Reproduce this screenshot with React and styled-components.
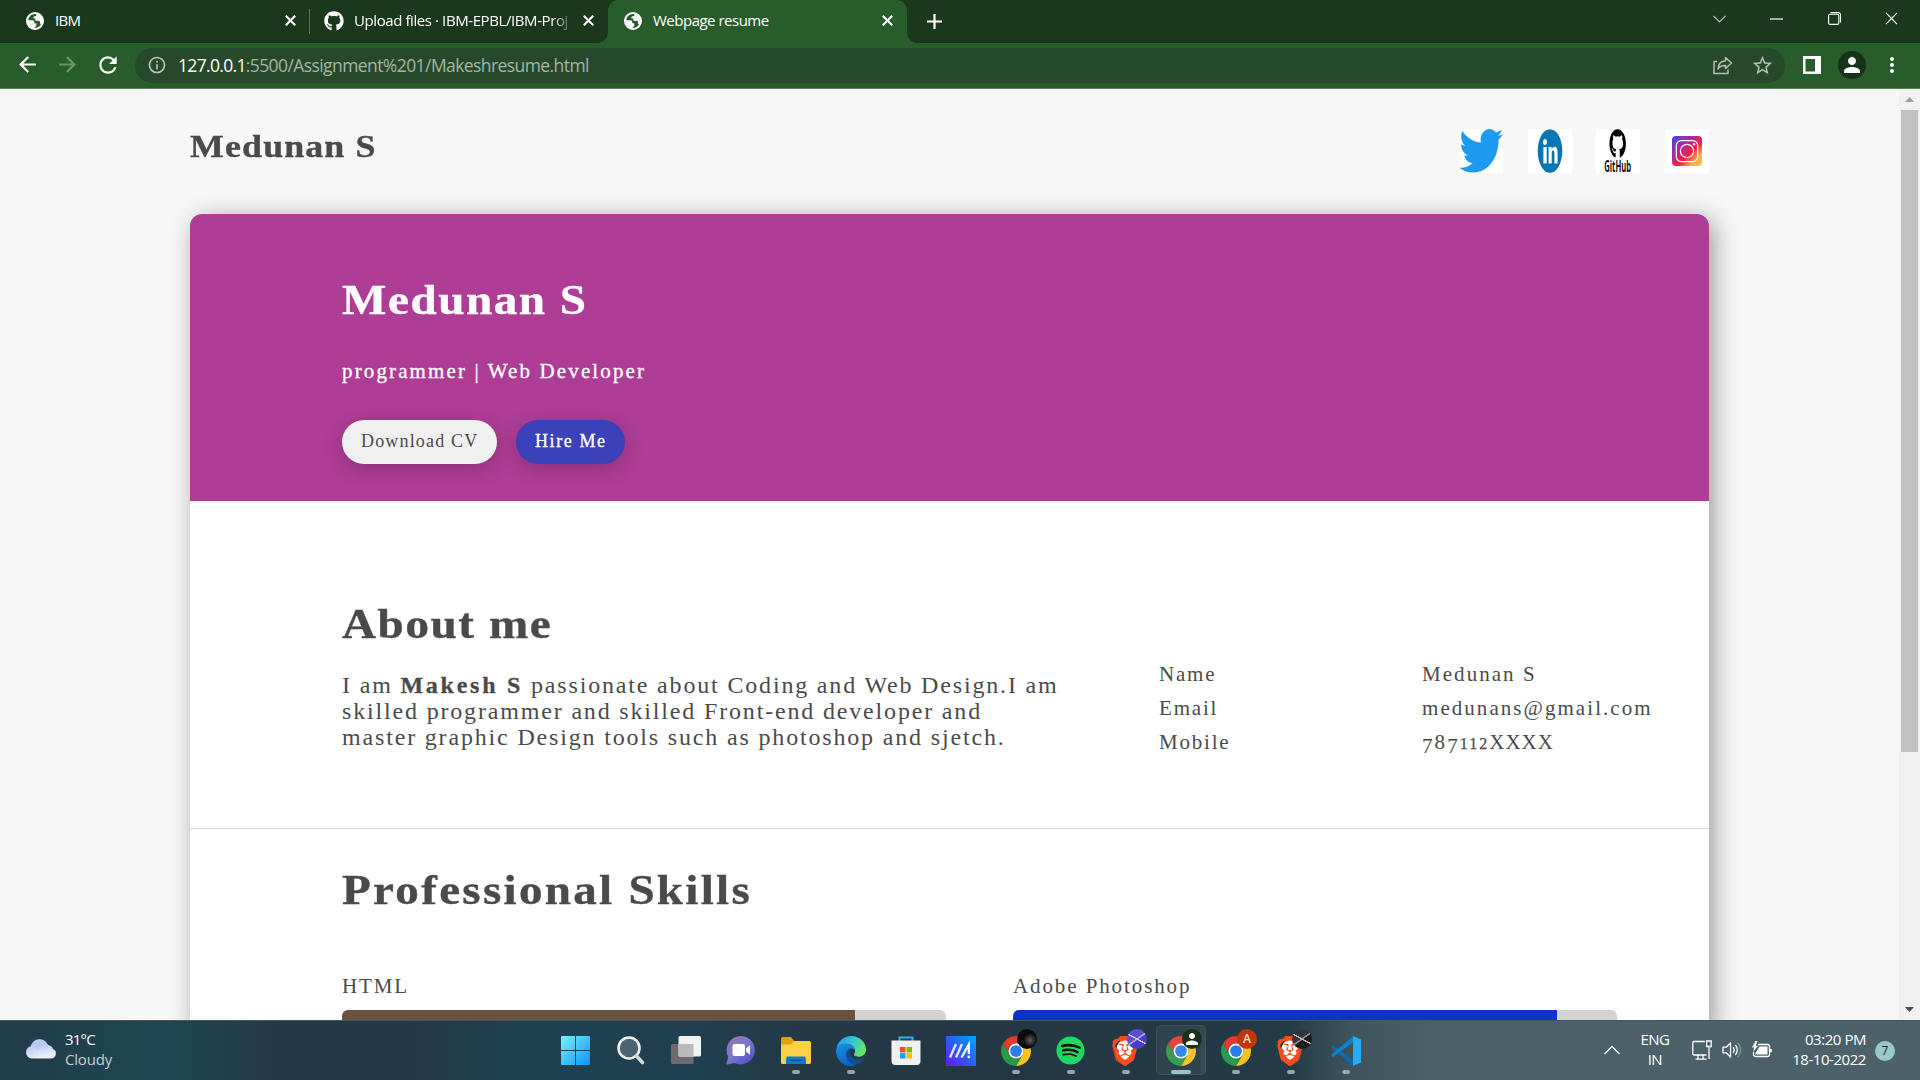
import React from "react";
import styled, { createGlobalStyle, css } from "styled-components";
import { MdArrowBack, MdArrowForward, MdRefresh, MdInfoOutline, MdStarBorder, MdMoreVert, MdPerson } from "react-icons/md";
import { FaGithub, FaSpotify } from "react-icons/fa";
import { SiBrave } from "react-icons/si";

const serif = `"Liberation Serif", Georgia, serif`;
const sans = `"Open Sans", "Segoe UI", sans-serif`;
const ink = "#4a4a4a";

const GlobalStyle = createGlobalStyle`
  *, *::before, *::after { box-sizing: border-box; }
  body { margin: 0; background: #f7f7f7; overflow: hidden; }
  svg { display: block; flex: none; overflow: visible; }
`;

const Screen = styled.div`
  width: 1920px;
  height: 1080px;
  display: flex;
  flex-direction: column;
  overflow: hidden;
  font-family: ${sans};
`;

/* ---------- browser chrome ---------- */

const TabStrip = styled.div`
  height: 43px;
  display: flex;
  background: #1a381b;
  color: #fff;
`;

const Tab = styled.div`
  position: relative;
  width: ${(p) => p.$width}px;
  display: flex;
  align-items: center;
  padding: 0 14px 2px ${(p) => p.$lead}px;
  font-size: 15px;
  letter-spacing: ${(p) => p.$track}px;
  ${(p) => p.$divider && css`
    &::after {
      content: "";
      position: absolute;
      right: 0;
      top: 9px;
      width: 1px;
      height: 25px;
      background: #5c755d;
    }
  `}
  ${(p) => p.$active && css`
    background: #285d2b;
    border-radius: 10px 10px 0 0;
    &::before, &::after {
      content: "";
      position: absolute;
      bottom: 0;
      width: 10px;
      height: 10px;
    }
    &::before {
      left: -10px;
      background: radial-gradient(circle at 0 0, transparent 9.5px, #285d2b 10px);
    }
    &::after {
      right: -10px;
      background: radial-gradient(circle at 100% 0, transparent 9.5px, #285d2b 10px);
    }
  `}
`;

const TabTitle = styled.span`
  flex: 1;
  margin: 0 ${(p) => (p.$fade ? 8 : 7)}px 2px ${(p) => p.$gap || 11}px;
  line-height: 22px;
  white-space: nowrap;
  ${(p) => p.$fade && css`
    -webkit-mask-image: linear-gradient(90deg, #000 calc(100% - 24px), transparent);
    mask-image: linear-gradient(90deg, #000 calc(100% - 24px), transparent);
  `}
`;

const NewTab = styled.div`
  display: flex;
  align-items: center;
  padding: 0 0 1px 20px;
`;

const WindowButtons = styled.div`
  margin-left: auto;
  display: flex;
  align-items: center;
  padding-bottom: 6px;
`;

const WindowButton = styled.div`
  width: 57.3px;
  display: flex;
  justify-content: center;
`;

const Toolbar = styled.div`
  height: 46px;
  display: flex;
  align-items: center;
  background: #285d2b;
  border-bottom: 1px solid #55805a;
  color: #fff;
  padding: 0 12px 1px 15px;
`;

const NavButtons = styled.div`
  flex: none;
  display: flex;
  gap: 15px;
  width: 120px;
  color: #fff;
`;

const Omnibox = styled.div`
  flex: none;
  width: 1650px;
  height: 35px;
  border-radius: 18px;
  background: #26492a;
  display: flex;
  align-items: center;
  padding: 0 11px 0 12px;
  color: #b9c3ba;
`;

const Address = styled.span`
  flex: 1;
  margin-left: 11px;
  font-size: 17.5px;
  line-height: 24px;
  letter-spacing: -0.58px;
  color: #a3b5a5;
  b {
    font-weight: 400;
    color: #fff;
    letter-spacing: -0.68px;
  }
`;

const OmniboxActions = styled.div`
  display: flex;
  align-items: center;
  gap: 18px;
  color: #b4beb5;
`;

const ToolbarActions = styled.div`
  flex: none;
  display: flex;
  align-items: center;
  padding-left: 18px;
  gap: 17px;
`;

const MenuDots = styled.div`
  margin-left: -3px;
`;

const Avatar = styled.div`
  width: 28px;
  height: 28px;
  border-radius: 50%;
  background: #17331a;
  display: flex;
  align-items: center;
  justify-content: center;
`;

/* ---------- page ---------- */

const Viewport = styled.div`
  height: 931px;
  display: flex;
  overflow: hidden;
  background: #f7f7f7;
`;

const Document = styled.main`
  width: 1899px;
  height: 931px;
  overflow: hidden;
  display: flex;
  flex-direction: column;
  align-items: center;
  font-family: ${serif};
  color: ${ink};
`;

const Masthead = styled.header`
  width: 1519px;
  height: 125px;
  flex: none;
  display: flex;
  justify-content: space-between;
  padding-top: 40px;
`;

const wide = css`
  transform: scaleX(1.12);
  transform-origin: left;
  -webkit-text-stroke: 0.4px currentColor;
`;

const Brand = styled.h2`
  margin: 0;
  font-size: 32px;
  line-height: 34px;
  letter-spacing: 1.03px;
  ${wide}
`;

const Social = styled.nav`
  display: flex;
  gap: 24.7px;
`;

const SocialTile = styled.div`
  width: 44px;
  height: 44px;
  background: #fff;
`;

const Card = styled.div`
  width: 1519px;
  flex: none;
  background: #fff;
  border-radius: 12px 12px 0 0;
  box-shadow: 5px 5px 25px rgba(0, 0, 0, 0.38);
`;

const Hero = styled.section`
  height: 287px;
  padding: 62px 152px 0;
  border-radius: 12px 12px 0 0;
  background: #ae3d95;
  color: #fff;
`;

const Heading = styled.h1`
  display: table;
  margin: 0;
  font-size: 42px;
  line-height: 48px;
  letter-spacing: ${(p) => p.$track}px;
  white-space: nowrap;
  ${wide}
`;

const Role = styled.p`
  margin: 35px 0 37px;
  font-size: 21px;
  line-height: 24px;
  letter-spacing: 2.13px;
  -webkit-text-stroke: 0.3px #fff;
`;

const ButtonRow = styled.div`
  display: flex;
  gap: 19px;
`;

const PillButton = styled.button`
  width: ${(p) => p.$width}px;
  height: 44px;
  border: 0;
  border-radius: 22px;
  padding: 0 0 2px 19px;
  text-align: left;
  white-space: nowrap;
  font-family: ${serif};
  font-size: 18px;
  letter-spacing: ${(p) => p.$track}px;
  background: ${(p) => (p.$primary ? "#3b41b8" : "#f0f0f0")};
  color: ${(p) => (p.$primary ? "#fff" : ink)};
  ${(p) => p.$primary && css`-webkit-text-stroke: 0.3px #fff;`}
  box-shadow: 0 5px 20px rgba(0, 0, 0, 0.2);
`;

const About = styled.section`
  height: 328px;
  display: flex;
  padding: 99px 0 0 152px;
  border-bottom: 1px solid #d8d8d8;
`;

const AboutText = styled.div`
  width: 817px;
`;

const Bio = styled.p`
  margin: 24px 0 0;
  font-size: 24px;
  line-height: 26px;
  letter-spacing: 1.83px;
  white-space: nowrap;
  b {
    letter-spacing: 2.75px;
    -webkit-text-stroke: 0.3px currentColor;
  }
`;

const Details = styled.dl`
  margin: 57px 0 0;
  display: grid;
  grid-template-columns: 263px auto;
  grid-auto-rows: 34px;
  font-size: 21px;
  line-height: 34px;
  letter-spacing: 2.05px;
  dt, dd { margin: 0; white-space: nowrap; }
  dt { letter-spacing: 1.8px; }
`;

const LowDigit = styled.span`
  vertical-align: -4px;
  line-height: 0;
`;

const SmallDigits = styled.span`
  font-size: 16px;
  line-height: 0;
  -webkit-text-stroke: 0.25px currentColor;
`;

const Tight = styled.span`
  letter-spacing: 1px;
`;

const Skills = styled.section`
  padding: 37px 92px 0 152px;
`;

const SkillGrid = styled.div`
  margin-top: 60px;
  display: grid;
  grid-template-columns: 604px 604px;
  column-gap: 67px;
`;

const SkillName = styled.div`
  font-size: 21px;
  line-height: 24px;
  letter-spacing: 1.9px;
`;

const SkillTrack = styled.div`
  margin-top: 12px;
  height: 20px;
  border-radius: 6px;
  background: #d3d3d3;
  overflow: hidden;
`;

const SkillFill = styled.div`
  width: ${(p) => p.$level}%;
  height: 100%;
  background: ${(p) => p.$color};
`;

const Scrollbar = styled.div`
  width: 21px;
  height: 931px;
  background: #f1f1f1;
  display: flex;
  flex-direction: column;
  align-items: center;
`;

const ScrollArrow = styled.div`
  height: 21px;
  display: flex;
  align-items: center;
  ${(p) => p.$end && css`margin-top: auto;`}
`;

const ScrollThumb = styled.div`
  width: 17px;
  height: 642px;
  background: #c1c1c1;
`;

/* ---------- taskbar ---------- */

const Taskbar = styled.footer`
  height: 60px;
  display: grid;
  grid-template-columns: 548px 825px 1fr;
  border-top: 1px solid #45565d;
  color: #fff;
  font-size: 15px;
  line-height: 20px;
  background: linear-gradient(90deg, #213c4a 0, #1e4652 160px, #243848 280px, #243848 400px, #1f4150 520px,
    #203f4f 700px, #243845 820px, #243744 1000px, #243a47 1290px, #3d545d 1350px, #4a6068 1430px, #4b626a 100%);
`;

const Weather = styled.div`
  display: flex;
  align-items: center;
  gap: 9px;
  padding: 0 0 4px 25px;
`;

const Stack = styled.div`
  display: flex;
  flex-direction: column;
  align-items: ${(p) => p.$align || "flex-start"};
  letter-spacing: ${(p) => p.$track || 0}px;
  white-space: nowrap;
`;

const Muted = styled.span`
  color: #c3cdd1;
  letter-spacing: -0.2px;
`;

const Apps = styled.div`
  display: flex;
`;

const AppSlot = styled.div`
  position: relative;
  width: 55px;
  height: 59px;
  display: flex;
  justify-content: center;
  padding-top: 15px;
  ${(p) => p.$running && css`
    &::after {
      content: "";
      position: absolute;
      left: ${(p.$active ? 18 : 23.5)}px;
      top: 49px;
      width: ${p.$active ? 20 : 8}px;
      height: 4px;
      border-radius: 2px;
      background: ${p.$active ? "#98c5cb" : "#9aa5aa"};
    }
  `}
  ${(p) => p.$active && css`
    &::before {
      content: "";
      position: absolute;
      left: 3px;
      top: 4px;
      width: 50px;
      height: 50px;
      border-radius: 5px;
      background: rgba(255, 255, 255, 0.06);
      border: 1px solid rgba(255, 255, 255, 0.07);
      box-shadow: inset -6px 0 0 -1px rgba(255, 255, 255, 0.03);
    }
  `}
`;

const ProfileBadge = styled.div`
  position: absolute;
  left: 29px;
  top: 8px;
  width: 20px;
  height: 20px;
  border-radius: 50%;
  display: flex;
  align-items: center;
  justify-content: center;
  font-size: 12px;
  font-weight: 600;
  color: #f6d5ca;
  background: ${(p) => p.$fill};
`;

const BraveMark = styled.div`
  width: 30px;
  height: 30px;
  margin-left: -2px;
  background: radial-gradient(ellipse 9px 11px at 50% 48%, #fff 92%, transparent);
  color: #fb4c1e;
`;

const SpotifyMark = styled.div`
  width: 29px;
  height: 29px;
  border-radius: 50%;
  background: radial-gradient(#101010 60%, transparent 61%);
  color: #1ed760;
`;

const Tray = styled.div`
  display: flex;
  align-items: center;
  justify-content: flex-end;
  padding-right: 25px;
  ${Stack} { padding-bottom: 4px; }
`;

const TrayIcons = styled.div`
  display: flex;
  align-items: center;
  gap: 10px;
  margin: 0 20px 2px 23px;
`;

const ChevronSlot = styled.div`
  margin-right: 20px;
  padding-bottom: 2px;
`;

const Notifications = styled.div`
  width: 20px;
  height: 20px;
  margin-left: 9px;
  border-radius: 50%;
  background: #9ac7cb;
  color: #16262b;
  font-size: 12px;
  line-height: 19px;
  text-align: center;
`;

/* ---------- drawings ---------- */

const Globe = () => (
  <svg width="18" height="18" viewBox="0 0 18 18">
    <circle cx="9" cy="9" r="9" fill="#fff" />
    <path d="M7.2 2.3C4.4 3 2.3 5.500 2.200 8.300H6.300c1.300 0 2 .8 2 1.800v1.200h2v1.900c0 1-.8 1.500-1.700 1.500v1.100c2.600.1 5-1.300 6.300-3.400-.7-.5-.9-1.400-.9-2.200-.2-1-1-1.400-2-1.400H9.600c-.5-.5-.5-1.700.2-2.200L8 6.400c-.8-.3-.9-1.500 0-2 .7-.3 1.800 0 2.300-.7.300-.5.1-1-.2-1.500-1-.2-2-.2-2.900.1Z" fill="#255a2a" />
    <path d="M2.300 9.800c.3 2.600 2 4.800 4.600 5.700V14c-1.200-.3-1.500-1.300-1.500-2.200Z" fill="#fff" />
  </svg>
);

const Cross = ({ size = 11, weight = 2 }) => (
  <svg width={size} height={size} viewBox="0 0 11 11" stroke="#fff" strokeWidth={weight}>
    <path d="M.8.8 10.200 10.200M10.200.8.8 10.200" />
  </svg>
);

const ShareIcon = () => (
  <svg width="20" height="19" viewBox="0 0 20 19" fill="none" stroke="currentColor" strokeWidth="1.500">
    <path d="M4 5.500H1v12h14v-4" />
    <path d="M12.500 1.500 18.500 7l-6 5.500V9.500C9 9.300 6.500 10.500 5 13c.3-4.500 3-8 7.500-8.300Z" strokeLinejoin="round" />
  </svg>
);

const PanelIcon = () => (
  <svg width="18" height="18" viewBox="0 0 18 18">
    <path d="M0 0h18v18H0Z" fill="#fff" />
    <path d="M2.500 3H12v12.500H2.500Z" fill="#285d2b" />
  </svg>
);

const TwitterLogo = () => (
  <svg width="44" height="44" viewBox="-4 48 516 420" preserveAspectRatio="none" fill="#1d9bf0">
    <path d="M459.37 151.716c.325 4.548.325 9.097.325 13.645 0 138.72-105.583 298.558-298.558 298.558-59.452 0-114.68-17.219-161.137-47.106 8.447.974 16.568 1.299 25.34 1.299 49.055 0 94.213-16.568 130.274-44.832-46.132-.975-84.792-31.188-98.112-72.772 6.498.974 12.995 1.624 19.818 1.624 9.421 0 18.843-1.3 27.614-3.573-48.081-9.747-84.143-51.98-84.143-102.985v-1.299c13.969 7.797 30.214 12.67 47.431 13.319-28.264-18.843-46.781-51.005-46.781-87.391 0-19.492 5.197-37.36 14.294-52.954 51.655 63.675 129.3 105.258 216.365 109.807-1.624-7.797-2.599-15.918-2.599-24.04 0-57.828 46.782-104.934 104.934-104.934 30.213 0 57.502 12.67 76.67 33.137 23.715-4.548 46.456-13.32 66.599-25.34-7.798 24.366-24.366 44.833-46.132 57.827 21.117-2.273 41.584-8.122 60.426-16.243-14.292 20.791-32.161 39.308-52.628 54.253z" />
  </svg>
);

const LinkedInLogo = () => (
  <svg width="44" height="44" viewBox="0 0 44 44">
    <ellipse cx="22" cy="22" rx="12.300" ry="21.800" fill="#0675b3" />
    <ellipse cx="17" cy="13" rx="1.900" ry="3" fill="#fff" />
    <path d="M15.400 18h3.300v16.500h-3.300ZM20.600 18h3v2.400c.7-1.800 1.700-2.700 2.900-2.700 2.400 0 3.100 2.700 3.100 7v9.800h-3.200v-9c0-2.500-.3-3.900-1.300-3.900-1.100 0-1.400 1.500-1.400 3.900v9h-3.100Z" fill="#fff" />
  </svg>
);

const GitHubLogo = () => (
  <svg width="44" height="44" viewBox="0 0 44 44">
    <g transform="translate(13.200 -0.300) scale(1.060 1.870)">
      <FaGithub size={16} color="#000" />
    </g>
    <text x="8.200" y="43" fontFamily="Open Sans" fontWeight="700" fontSize="16.500" textLength="27" lengthAdjust="spacingAndGlyphs" fill="#111">GitHub</text>
  </svg>
);

const InstagramLogo = () => (
  <svg width="44" height="44" viewBox="0 0 44 44">
    <defs>
      <linearGradient id="ig" x1="0" y1="0" x2="1" y2="1">
        <stop offset=".08" stopColor="#5045dd" />
        <stop offset=".35" stopColor="#b0279c" />
        <stop offset=".6" stopColor="#f5223c" />
        <stop offset=".8" stopColor="#ffb04a" />
        <stop offset="1" stopColor="#ffc04f" />
      </linearGradient>
    </defs>
    <rect x="7" y="7" width="30" height="30" rx="4" fill="url(#ig)" />
    <g fill="none" stroke="#fff" strokeWidth="1.200">
      <rect x="11.300" y="11.600" width="21.400" height="21" rx="5" />
      <circle cx="22" cy="22" r="6.600" />
    </g>
    <circle cx="29" cy="15.300" r="1.200" fill="#fff" />
  </svg>
);

const ChromeLogo = () => (
  <svg width="30" height="30" viewBox="0 0 48 48">
    <path d="M24 12H44.780A24 24 0 0 0 3.220 12L13.610 30A12 12 0 0 1 24 12Z" fill="#e33b2e" />
    <path d="M34.390 30 24 48A24 24 0 0 0 44.780 12H24A12 12 0 0 1 34.390 30Z" fill="#fcc31e" />
    <path d="M13.610 30 3.220 12A24 24 0 0 0 24 48L34.390 30A12 12 0 0 1 13.610 30Z" fill="#269a48" />
    <circle cx="24" cy="24" r="12" fill="#fff" />
    <circle cx="24" cy="24" r="9.400" fill="#2b7de9" />
  </svg>
);

const WindowsLogo = () => (
  <svg width="29" height="29" viewBox="0 0 29 29">
    <defs>
      <linearGradient id="win" x1="0" y1="0" x2="1" y2="1">
        <stop stopColor="#7cf0ff" />
        <stop offset="1" stopColor="#0a94fb" />
      </linearGradient>
    </defs>
    <path d="M1 0h13v14H0V1a1 1 0 0 1 1-1ZM15 0h13a1 1 0 0 1 1 1v13H15ZM0 15h14v14H1a1 1 0 0 1-1-1ZM15 15h14v13a1 1 0 0 1-1 1H15Z" fill="url(#win)" />
  </svg>
);

const SearchLogo = () => (
  <svg width="28" height="29" viewBox="0 0 28 29">
    <circle cx="12" cy="12" r="10.500" fill="#4a6571" stroke="#eceeef" strokeWidth="2.600" />
    <path d="m19.500 20 6 6.500" stroke="#d4d8da" strokeWidth="3.600" strokeLinecap="round" />
  </svg>
);

const TaskViewLogo = () => (
  <svg width="30" height="29" viewBox="0 0 30 29">
    <rect x="0" y="8" width="22.500" height="20" rx="1.500" fill="#6c6c6d" />
    <rect x="7.500" y="0" width="22.500" height="20.500" rx="1.500" fill="#f3f3f4" />
    <path d="M7.500 8h15v12.500H9a1.500 1.500 0 0 1-1.500-1.500Z" fill="#b9babc" />
  </svg>
);

const ChatLogo = () => (
  <svg width="30" height="29" viewBox="0 0 30 29">
    <defs>
      <linearGradient id="chat" x1="0" y1="0" x2=".8" y2="1">
        <stop stopColor="#a36fae" />
        <stop offset=".5" stopColor="#7d79cc" />
        <stop offset="1" stopColor="#4f50c8" />
      </linearGradient>
    </defs>
    <path d="M15 0a14.200 14.200 0 1 1-6.500 27L1.500 28.500c-.8.200-1.200-.4-1-1.200L2.300 21A14.200 14.200 0 0 1 15 0Z" fill="url(#chat)" />
    <rect x="6.500" y="8" width="12.500" height="12" rx="2" fill="#fff" />
    <path d="m20 12.500 4-3.300v9.600l-4-3.300Z" fill="#fff" />
  </svg>
);

const FolderLogo = () => (
  <svg width="30" height="29" viewBox="0 0 30 29">
    <path d="M0 3a2 2 0 0 1 2-2h8l3 3.500V12H0Z" fill="#e3a008" />
    <path d="M0 8.500h10l3-3.500h15.500A1.500 1.500 0 0 1 30 6.500v20A1.500 1.500 0 0 1 28.500 28h-27A1.500 1.500 0 0 1 0 26.500Z" fill="#ffcf45" />
    <path d="M5 28v-5.500a2 2 0 0 1 2-2h16a2 2 0 0 1 2 2V28Z" fill="#0f7ad0" />
    <path d="M8.500 24.300h13" stroke="#0a4d8f" strokeWidth="1.200" />
  </svg>
);

const EdgeLogo = () => (
  <svg width="30" height="30" viewBox="0 0 30 30">
    <defs>
      <linearGradient id="edgeTop" x1="0" y1=".2" x2="1" y2=".6">
        <stop stopColor="#1f9de0" />
        <stop offset=".5" stopColor="#35c3d6" />
        <stop offset="1" stopColor="#66eb58" />
      </linearGradient>
      <linearGradient id="edgeLow" x1="0" y1="0" x2=".5" y2="1">
        <stop stopColor="#1b94dd" />
        <stop offset="1" stopColor="#0b62c4" />
      </linearGradient>
    </defs>
    <path d="M.5 12.500C1.800 5 8 0 15.200 0 24 0 30 6.500 30 13.500c0 4.300-3.200 7.300-7.300 7.300-2.600 0-4.800-1-4.800-2.200 0-.8 1.200-1.200 1.200-3.300C19.100 10.500 14.500 8 10 8 5.500 8 2 10 .5 12.500Z" fill="url(#edgeTop)" />
    <path d="M.1 15C.2 10.500 4 7.400 9.500 7.400c5 0 9 2.600 9.500 7-1.500-1.500-3.800-2-5.600-1.200-3.400 1.500-4 5.800-2.200 9.300 1.800 3.700 5.400 5.800 9 6.500-2 .8-4.200 1.100-6.300 1C6.500 29.600 0 23.500.1 15Z" fill="url(#edgeLow)" />
    <path d="M13 13.400c-3.300 1.500-4 5.600-2.100 9.100 2.600 5 7.500 6.800 10.300 6.100 2.500-1.100 4.800-3 6.300-5.300.4-.7-.2-1.100-.8-.8-4.300 2.200-9.500 1.300-12.100-2.300-1.600-2.100-1.700-4.500-.6-6.600Z" fill="#0d4f9c" />
  </svg>
);

const StoreLogo = () => (
  <svg width="30" height="29" viewBox="0 0 30 29">
    <path d="M8.500 6V1.500h13V6" fill="none" stroke="#2cb4f0" strokeWidth="2" />
    <path d="M0.500 4.500h29v20.500a4 4 0 0 1-4 4h-21a4 4 0 0 1-4-4Z" fill="#f1f1f1" />
    <path d="M9 11h5.500v5.500H9Z" fill="#f05022" />
    <path d="M15.500 11H21v5.500h-5.500Z" fill="#7fba00" />
    <path d="M9 17.200h5.500v5.300H9Z" fill="#00a4ef" />
    <path d="M15.500 17.200H21v5.300h-5.500Z" fill="#ffb900" />
  </svg>
);

const MyAsusLogo = () => (
  <svg width="30" height="30" viewBox="0 0 30 30">
    <defs>
      <linearGradient id="asus" x1="0" y1="1" x2="1" y2="0">
        <stop stopColor="#6a14f5" />
        <stop offset=".5" stopColor="#2a60f5" />
        <stop offset="1" stopColor="#00a8ff" />
      </linearGradient>
    </defs>
    <path d="M0 0h30v30H0Z" fill="url(#asus)" />
    <path d="M4 21.500 10 8M10 21.500 16 8" fill="none" stroke="#dfe4ff" strokeWidth="2.400" />
    <path d="M15.500 21.500 22.800 8.500v9.500" fill="none" stroke="#fff" strokeWidth="2.200" />
    <circle cx="22.800" cy="21" r="1.400" fill="#fff" />
  </svg>
);

const CodeLogo = () => (
  <svg width="30" height="30" viewBox="0 0 30 30">
    <path d="m0 11.200 2-2 20.500 15.300V30L0 11.200Z" fill="#0a6cb3" />
    <path d="M2 21 0 19 22.500 0v6L2 21Z" fill="#1480cc" />
    <path d="M22 0 30 3.500v23L22 30Z" fill="#2aa9f2" />
  </svg>
);

const CloudIcon = () => (
  <svg width="31" height="20" viewBox="0 0 31 20">
    <defs>
      <linearGradient id="cloud" x1="0" y1="0" x2=".4" y2="1">
        <stop stopColor="#a9c2ee" />
        <stop offset="1" stopColor="#eef1f8" />
      </linearGradient>
    </defs>
    <circle cx="14.500" cy="9" r="9" fill="#b4caf0" />
    <path d="M6.500 7c3 0 5 1.500 6.500 4 1.500-3.500 4-5.500 7.500-5.500 4.500 0 7 2.500 7.500 4.500a5 5 0 0 1-2.500 9.500h-19A6.300 6.300 0 0 1 6.500 7Z" fill="url(#cloud)" />
  </svg>
);

const NetworkIcon = () => (
  <svg width="20" height="20" viewBox="0 0 20 20" fill="none" stroke="#fff" strokeWidth="1.300">
    <path d="M13 1.500H2A1.200 1.200 0 0 0 .8 2.700v11.100A1.200 1.200 0 0 0 2 15h12.500M6 15v4m5-4v4M3.500 19.200h11" />
    <path d="M14.700 1h4.500v5.500h-4.500ZM17 6.500V19" />
  </svg>
);

const SpeakerIcon = () => (
  <svg width="20" height="18" viewBox="0 0 20 18" fill="none" stroke="#fff" strokeWidth="1.300">
    <path d="M1 6.200h3.200L8.500 2v14l-4.300-4.200H1Z" strokeLinejoin="round" />
    <path d="M11 6.300c1.300 1.500 1.300 3.900 0 5.400M13.300 4c2.600 2.700 2.600 7.300 0 10" />
    <path d="M15.700 1.800c3.900 4 3.900 10.400 0 14.400" stroke="#7e9197" />
  </svg>
);

const BatteryIcon = () => (
  <svg width="20" height="18" viewBox="0 0 20 18">
    <path d="M6 3.500h9.500a2 2 0 0 1 2 2v8a2 2 0 0 1-2 2h-12a2 2 0 0 1-2-2V11" fill="none" stroke="#fff" strokeWidth="1.300" />
    <path d="M7.500 5.500H15.500v8h-12V12ZM18 8h1.800v3.200H18ZM3.500 0 0 6.500h2.300L1 11l5-6.200H3.700L5.500 0Z" fill="#fff" />
  </svg>
);

const apps = [
  { id: "start", icon: <WindowsLogo /> },
  { id: "search", icon: <SearchLogo /> },
  { id: "tasks", icon: <TaskViewLogo /> },
  { id: "chat", icon: <ChatLogo /> },
  { id: "files", icon: <FolderLogo />, running: true },
  { id: "edge", icon: <EdgeLogo />, running: true },
  { id: "store", icon: <StoreLogo /> },
  { id: "asus", icon: <MyAsusLogo /> },
  { id: "chrome-1", icon: <ChromeLogo />, running: true, badge: "radial-gradient(circle at 65% 55%, #555 0 6%, #0a0a0a 40%)" },
  { id: "spotify", icon: <SpotifyMark><FaSpotify size={29} /></SpotifyMark>, running: true },
  { id: "brave-1", icon: <BraveMark><SiBrave size={30} /></BraveMark>, running: true, badge: "linear-gradient(28deg, transparent 47%, #cfcdf5 48% 52%, transparent 53%), linear-gradient(-35deg, #4a3fc4 46%, #a9a5ec 48% 52%, #5a50cf 54%)" },
  { id: "chrome-2", icon: <ChromeLogo />, running: true, active: true, badge: "#17331a", glyph: <MdPerson size={18} color="#fff" /> },
  { id: "chrome-3", icon: <ChromeLogo />, running: true, badge: "#bf360c", glyph: "A" },
  { id: "brave-2", icon: <BraveMark><SiBrave size={30} /></BraveMark>, running: true, badge: "linear-gradient(28deg, transparent 47%, #b9b9bb 48% 52%, transparent 53%), linear-gradient(-35deg, #1c1c20 46%, #8a8a8e 48% 52%, #34343a 54%)" },
  { id: "code", icon: <CodeLogo />, running: true },
];

const skills = [
  { name: "HTML", level: 85, color: "#6b5240" },
  { name: "Adobe Photoshop", level: 90, color: "#0f32c6" },
];

export default function App() {
  return (
    <Screen>
      <GlobalStyle />

      <TabStrip>
        <Tab $width={310} $lead={26} $track={-0.7} $divider>
          <Globe />
          <TabTitle>IBM</TabTitle>
          <Cross />
        </Tab>
        <Tab $width={298} $lead={14} $track={-0.41}>
          <FaGithub size={20} />
          <TabTitle $gap={10} $fade>Upload files · IBM-EPBL/IBM-Proj</TabTitle>
          <Cross />
        </Tab>
        <Tab $width={299} $lead={16} $track={-0.5} $active>
          <Globe />
          <TabTitle>Webpage resume</TabTitle>
          <Cross />
        </Tab>
        <NewTab>
          <svg width="15" height="15" viewBox="0 0 15 15" stroke="#fff" strokeWidth="2.200"><path d="M7.500 0v15M0 7.500h15" /></svg>
        </NewTab>
        <WindowButtons>
          <WindowButton>
            <svg width="13" height="8" viewBox="0 0 13 8" fill="none" stroke="#b9c4ba" strokeWidth="1.200"><path d="m.5.8 6 6 6-6" /></svg>
          </WindowButton>
          <WindowButton>
            <svg width="13" height="2" viewBox="0 0 13 2" stroke="#fff" strokeWidth="1.200"><path d="M0 1h13" /></svg>
          </WindowButton>
          <WindowButton>
            <svg width="13" height="13" viewBox="0 0 13 13" fill="none" stroke="#fff" strokeWidth="1.100">
              <rect x=".6" y="2.200" width="10.200" height="10.200" rx="1.500" />
              <path d="M2.500.6h7.800a2.200 2.200 0 0 1 2.200 2.200v7.800" />
            </svg>
          </WindowButton>
          <WindowButton><Cross size={13} weight={1} /></WindowButton>
        </WindowButtons>
      </TabStrip>

      <Toolbar>
        <NavButtons>
          <MdArrowBack size={25} />
          <MdArrowForward size={25} color="#6f9472" />
          <MdRefresh size={26} />
        </NavButtons>
        <Omnibox>
          <MdInfoOutline size={20} />
          <Address><b>127.0.0.1</b>:5500/Assignment%201/Makeshresume.html</Address>
          <OmniboxActions>
            <ShareIcon />
            <MdStarBorder size={23} />
          </OmniboxActions>
        </Omnibox>
        <ToolbarActions>
          <PanelIcon />
          <Avatar><MdPerson size={24} /></Avatar>
          <MenuDots><MdMoreVert size={24} /></MenuDots>
        </ToolbarActions>
      </Toolbar>

      <Viewport>
        <Document>
          <Masthead>
            <Brand>Medunan S</Brand>
            <Social>
              <SocialTile><TwitterLogo /></SocialTile>
              <SocialTile><LinkedInLogo /></SocialTile>
              <SocialTile><GitHubLogo /></SocialTile>
              <SocialTile><InstagramLogo /></SocialTile>
            </Social>
          </Masthead>
          <Card>
            <Hero>
              <Heading $track={1.41}>Medunan S</Heading>
              <Role>programmer | Web Developer</Role>
              <ButtonRow>
                <PillButton $width={155} $track={1.17}>Download CV</PillButton>
                <PillButton $width={109} $track={1.6} $primary>Hire Me</PillButton>
              </ButtonRow>
            </Hero>
            <About>
              <AboutText>
                <Heading $track={1.45}>About me</Heading>
                <Bio>
                  I am <b>Makesh S</b> passionate about Coding and Web Design.I am<br />
                  skilled programmer and skilled Front-end developer and<br />
                  master graphic Design tools such as photoshop and sjetch.
                </Bio>
              </AboutText>
              <Details>
                <dt>Name</dt>
                <dd>Medunan S</dd>
                <dt>Email</dt>
                <dd>medunans@gmail.com</dd>
                <dt>Mobile</dt>
                <dd><LowDigit>7</LowDigit>8<LowDigit>7</LowDigit><SmallDigits>112</SmallDigits><Tight>XXXX</Tight></dd>
              </Details>
            </About>
            <Skills>
              <Heading $track={2.05}>Professional Skills</Heading>
              <SkillGrid>
                {skills.map((s) => (
                  <div key={s.name}>
                    <SkillName>{s.name}</SkillName>
                    <SkillTrack><SkillFill $level={s.level} $color={s.color} /></SkillTrack>
                  </div>
                ))}
              </SkillGrid>
            </Skills>
          </Card>
        </Document>
        <Scrollbar>
          <ScrollArrow><svg width="9" height="5" viewBox="0 0 9 5"><path d="M0 5 4.500 0 9 5Z" fill="#a0a0a0" /></svg></ScrollArrow>
          <ScrollThumb />
          <ScrollArrow $end><svg width="9" height="5" viewBox="0 0 9 5"><path d="M0 0h9L4.500 5Z" fill="#4d4d4d" /></svg></ScrollArrow>
        </Scrollbar>
      </Viewport>

      <Taskbar>
        <Weather>
          <CloudIcon />
          <Stack $track={-0.8}>
            <span>31°C</span>
            <Muted>Cloudy</Muted>
          </Stack>
        </Weather>
        <Apps>
          {apps.map((a) => (
            <AppSlot key={a.id} $running={a.running} $active={a.active}>
              {a.icon}
              {a.badge && <ProfileBadge $fill={a.badge}>{a.glyph}</ProfileBadge>}
            </AppSlot>
          ))}
        </Apps>
        <Tray>
          <ChevronSlot>
            <svg width="16" height="10" viewBox="0 0 16 10" fill="none" stroke="#fff" strokeWidth="1.300"><path d="m.5 9 7.500-7.500L15.500 9" /></svg>
          </ChevronSlot>
          <Stack $align="center" $track={-0.6}>
            <span>ENG</span>
            <span>IN</span>
          </Stack>
          <TrayIcons>
            <NetworkIcon />
            <SpeakerIcon />
            <BatteryIcon />
          </TrayIcons>
          <Stack $align="flex-end" $track={-0.45}>
            <span>03:20 PM</span>
            <span>18-10-2022</span>
          </Stack>
          <Notifications>7</Notifications>
        </Tray>
      </Taskbar>
    </Screen>
  );
}
